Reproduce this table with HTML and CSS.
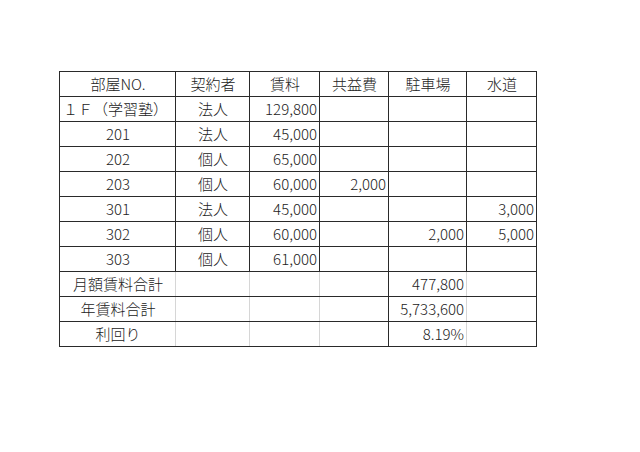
FILE: index.html
```html
<!DOCTYPE html>
<html lang="ja">
<head>
<meta charset="utf-8">
<link rel="stylesheet" href="styles.css">
</head>
<body>
<div class="sheet">
<table class="grid">
<colgroup>
<col class="c1"><col class="c2"><col class="c3"><col class="c4"><col class="c5"><col class="c6">
</colgroup>
<tr class="head"><td>部屋NO.</td><td>契約者</td><td>賃料</td><td>共益費</td><td>駐車場</td><td>水道</td></tr>
<tr><td class="l">１Ｆ（学習塾）</td><td class="c">法人</td><td class="r">129,800</td><td></td><td></td><td></td></tr>
<tr><td class="c">201</td><td class="c">法人</td><td class="r">45,000</td><td></td><td></td><td></td></tr>
<tr><td class="c">202</td><td class="c">個人</td><td class="r">65,000</td><td></td><td></td><td></td></tr>
<tr><td class="c">203</td><td class="c">個人</td><td class="r">60,000</td><td class="r">2,000</td><td></td><td></td></tr>
<tr><td class="c">301</td><td class="c">法人</td><td class="r">45,000</td><td></td><td></td><td class="r">3,000</td></tr>
<tr><td class="c">302</td><td class="c">個人</td><td class="r">60,000</td><td></td><td class="r">2,000</td><td class="r">5,000</td></tr>
<tr><td class="c">303</td><td class="c">個人</td><td class="r">61,000</td><td></td><td></td><td></td></tr>
<tr class="tot"><td class="c">月額賃料合計</td><td></td><td></td><td></td><td class="r">477,800</td><td></td></tr>
<tr class="tot"><td class="c">年賃料合計</td><td></td><td></td><td></td><td class="r">5,733,600</td><td></td></tr>
<tr class="tot"><td class="c">利回り</td><td></td><td></td><td></td><td class="r">8.19%</td><td></td></tr>
</table>
</div>
</body>
</html>
```
FILE: styles.css
```css
html, body {
  margin: 0;
  padding: 0;
  background: #fff;
}
.sheet {
  padding: 71px 0 0 59px;
}
.grid {
  border-collapse: collapse;
  table-layout: fixed;
  width: 477px;
  font-family: "Noto Sans CJK JP", "Noto Sans", sans-serif;
  font-size: 15px;
  font-weight: 300;
  color: #222;
}
.c1 { width: 116px; }
.c2 { width: 74px; }
.c3 { width: 70px; }
.c4 { width: 69px; }
.c5 { width: 78px; }
.c6 { width: 70px; }
.grid td {
  border: 1px solid #2a2a2a;
  height: 25px;
  padding: 0 2px 0 3px;
  line-height: 20px;
  white-space: nowrap;
  overflow: visible;
  box-sizing: border-box;
}
.head td { text-align: center; }
.l { text-align: left; }
.c { text-align: center; }
.r { text-align: right; }
.tot td {
  border-left-color: #d6d6d6;
  border-right-color: #d6d6d6;
}
.tot td:first-child { border-left-color: #2a2a2a; }
.tot td:nth-child(4) { border-right-color: #2a2a2a; }
.tot td:nth-child(5) { border-left-color: #2a2a2a; border-right-color: #d6d6d6; }
.tot td:last-child { border-right-color: #2a2a2a; }
```
